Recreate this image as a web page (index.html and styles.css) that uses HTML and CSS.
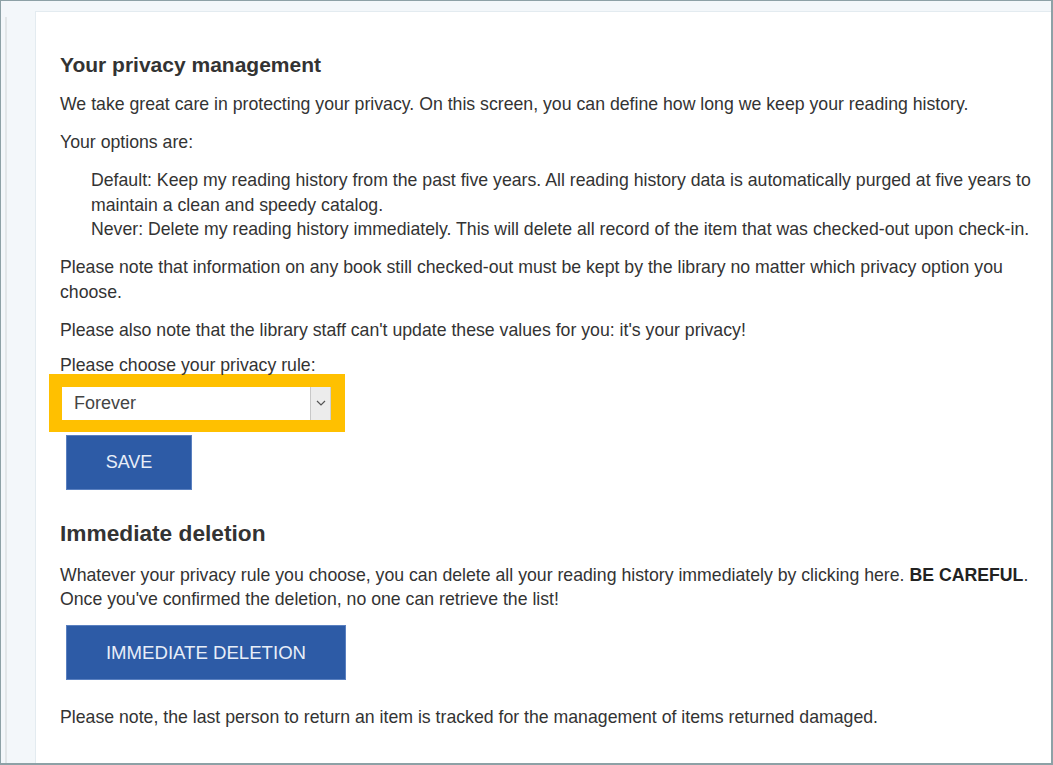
FILE: index.html
```html
<!DOCTYPE html>
<html lang="en">
<head>
<meta charset="utf-8">
<title>Your privacy management</title>
<link rel="stylesheet" href="styles.css">
</head>
<body>
<div class="frame">
  <div class="rail"></div>
  <main class="panel">
    <h1 class="title">Your privacy management</h1>
    <p>We take great care in protecting your privacy. On this screen, you can define how long we keep your reading history.</p>
    <p>Your options are:</p>
    <div class="options">
      <p class="opt">Default: Keep my reading history from the past five years. All reading history data is automatically purged at five years to maintain a clean and speedy catalog.</p>
      <p class="opt">Never: Delete my reading history immediately. This will delete all record of the item that was checked-out upon check-in.</p>
    </div>
    <p>Please note that information on any book still checked-out must be kept by the library no matter which privacy option you choose.</p>
    <p>Please also note that the library staff can't update these values for you: it's your privacy!</p>
    <label class="label" for="rule">Please choose your privacy rule:</label>
    <div class="focus">
      <div class="select" id="rule">
        <span class="value">Forever</span>
        <span class="arrow"><svg width="10" height="6" viewBox="0 0 10 6"><path d="M1 1 L5 5 L9 1" fill="none" stroke="#555" stroke-width="1.2"/></svg></span>
      </div>
    </div>
    <button class="btn btn-save" type="button">SAVE</button>
    <h2 class="title2">Immediate deletion</h2>
    <p>Whatever your privacy rule you choose, you can delete all your reading history immediately by clicking here. <strong>BE CAREFUL</strong>. Once you've confirmed the deletion, no one can retrieve the list!</p>
    <button class="btn btn-del" type="button">IMMEDIATE DELETION</button>
    <p class="last">Please note, the last person to return an item is tracked for the management of items returned damaged.</p>
  </main>
</div>
</body>
</html>
```
FILE: styles.css
```css
html, body {
  margin: 0;
  padding: 0;
  height: 100%;
  overflow: hidden;
}
body {
  font-family: "Liberation Sans", Arial, sans-serif;
  color: #333;
  background: #fff;
}
.frame {
  box-sizing: border-box;
  width: 1053px;
  height: 765px;
  border: 1px solid #8da1a6;
  border-right-width: 2px;
  border-bottom-width: 2px;
  background: #f3f7fa;
  display: flex;
  padding-top: 10px;
  overflow: hidden;
}
.rail {
  width: 2px;
  margin-left: 4px;
  margin-top: 6px;
  background: #e2e6e8;
  flex: none;
}
.panel {
  flex: 1;
  margin-left: 28px;
  background: #fff;
  border-top: 1px solid #e3ebf0;
  border-left: 1px solid #e3ebf0;
  padding: 40px 12px 0 24px;
  font-size: 17.7px;
  line-height: 24.5px;
}
.title {
  font-size: 21px;
  font-weight: bold;
  margin: 0 0 14px;
  line-height: 26px;
}
p {
  margin: 0 0 13.5px;
}
.options {
  margin: 0 0 13.5px 31px;
}
.options .opt {
  margin: 0;
}
.label {
  display: block;
  line-height: 19px;
  margin-bottom: -1px;
}
.focus {
  width: 296px;
  box-sizing: border-box;
  margin-left: -11px;
  background: #ffc000;
  padding: 13px 14px 12px 13px;
}
.select {
  display: flex;
  height: 33px;
  background: #fff;
  box-sizing: border-box;
}
.value {
  flex: 1;
  padding-left: 12px;
  line-height: 33px;
  font-size: 18px;
  color: #444;
}
.arrow {
  width: 19px;
  background: #ececec;
  border-left: 1px solid #c8c8c8;
  border-right: 1px solid #d0d0d0;
  display: flex;
  align-items: center;
  justify-content: center;
}
.btn {
  display: block;
  background: #2d5ba6;
  color: #e8eef8;
  border: 1px solid #5a80c0;
  font-family: "Liberation Sans", Arial, sans-serif;
  font-size: 18px;
  height: 55px;
  padding: 0;
  margin-left: 6px;
}
.btn-save {
  width: 126px;
  margin-top: 3px;
}
.title2 {
  font-size: 22.7px;
  font-weight: bold;
  margin: 29px 0 16px;
  line-height: 28px;
}
.btn-del {
  width: 280px;
  margin-top: 0;
  margin-bottom: 25px;
  font-size: 18.6px;
}
.last {
  margin: 0;
}
strong {
  color: #222;
}
```
